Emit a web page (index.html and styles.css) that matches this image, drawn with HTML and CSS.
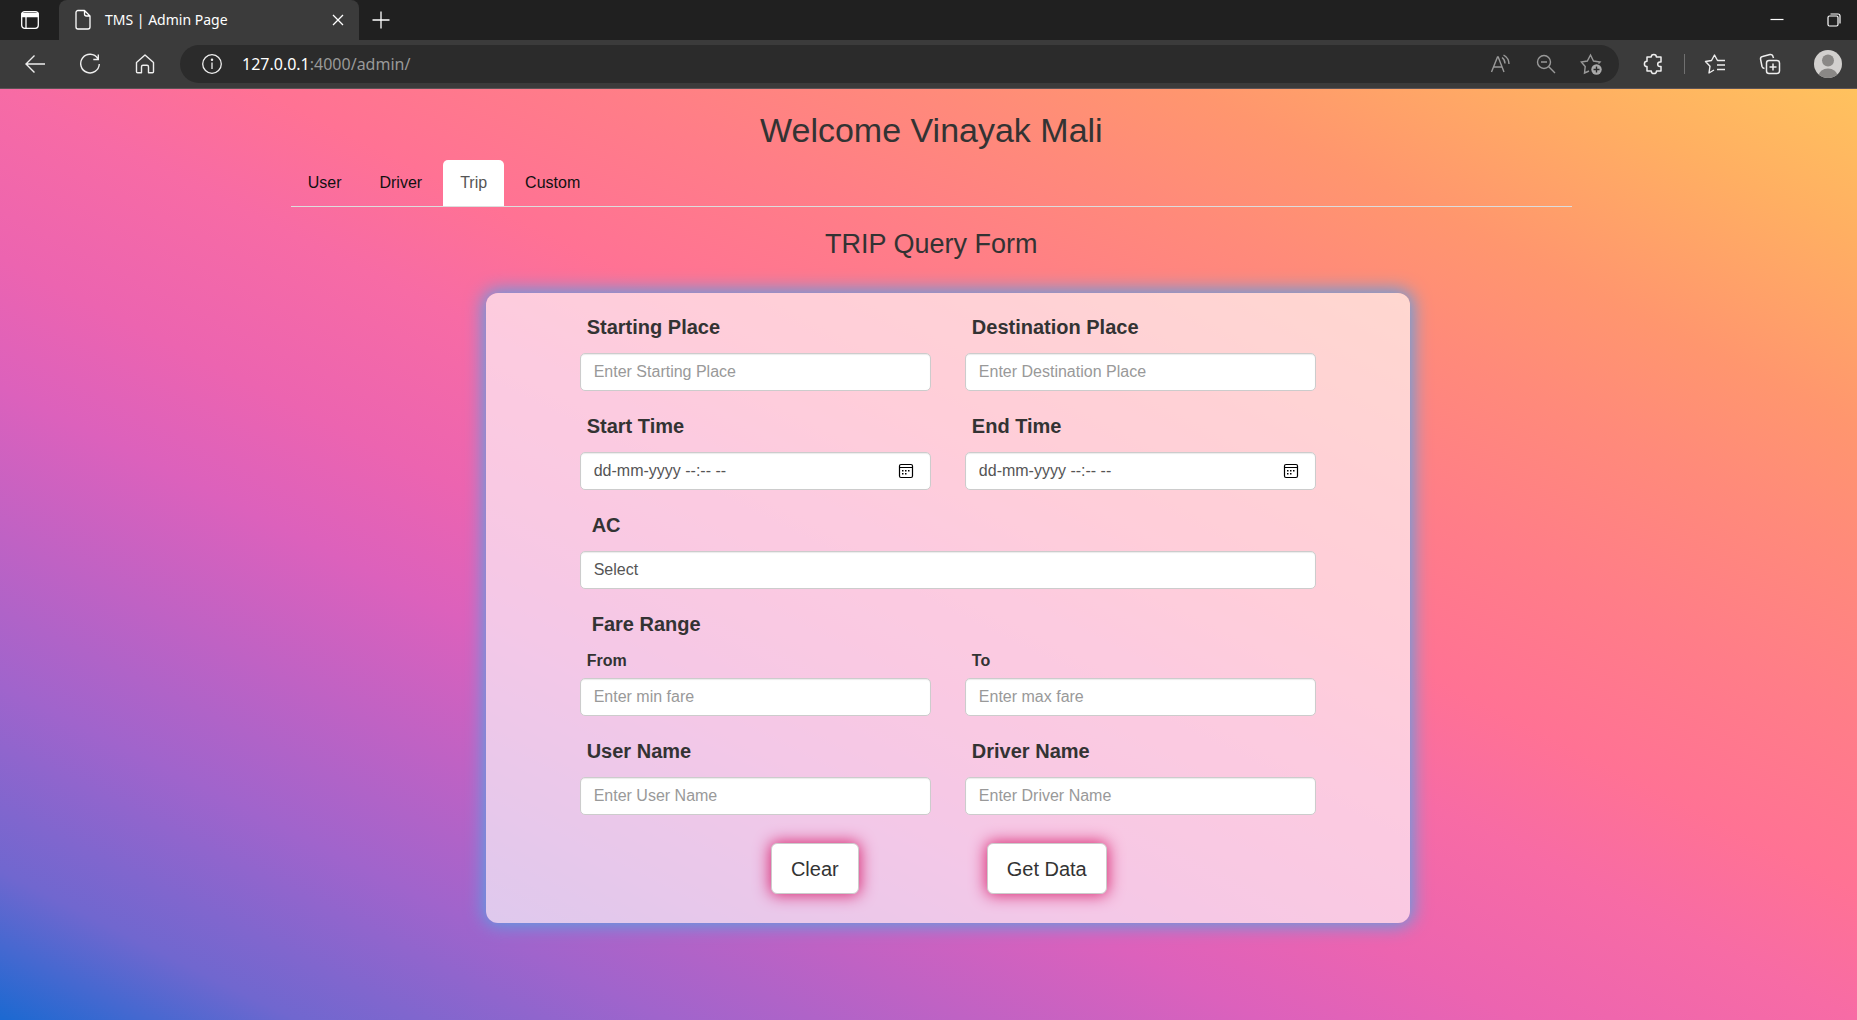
FILE: index.html
```html
<!DOCTYPE html>
<html lang="en">
<head>
<meta charset="utf-8">
<title>TMS | Admin Page</title>
<link rel="stylesheet" href="styles.css">
</head>
<body>
<header class="browser">
  <div class="tabstrip">
    <button class="icon-btn tab-actions" aria-label="Tab actions">
      <svg width="20" height="20" viewBox="0 0 20 20" fill="none" stroke="#fff" stroke-width="1.3"><rect x="1.7" y="1.7" width="16.6" height="16.6" rx="3"/><path d="M2 3.5h16v3H2z" fill="#fff"/><path d="M6 6v12"/></svg>
    </button>
    <div class="tab">
      <svg width="18" height="22" viewBox="0 0 18 22" fill="none" stroke="#fff" stroke-width="1.3" stroke-linejoin="round"><path d="M10.500 1.500H4a2 2 0 0 0-2 2v14.500a2 2 0 0 0 2 2h10a2 2 0 0 0 2-2V7L10.500 1.500V5a2 2 0 0 0 2 2h3.500"/></svg>
      <span class="tab-title">TMS | Admin Page</span>
      <button class="icon-btn" aria-label="Close tab"><svg width="12" height="12" viewBox="0 0 12 12" stroke="#fff" stroke-width="1.3"><path d="M1 1l10 10M11 1L1 11"/></svg></button>
    </div>
    <button class="icon-btn new-tab" aria-label="New tab"><svg width="18" height="18" viewBox="0 0 18 18" stroke="#fff" stroke-width="1.3"><path d="M9 .5v17M.5 9h17"/></svg></button>
    <div class="window-controls">
      <button class="icon-btn" aria-label="Minimize"><svg width="14" height="14" viewBox="0 0 14 14" stroke="#fff" stroke-width="1.2"><path d="M.5 6.500h13"/></svg></button>
      <button class="icon-btn" aria-label="Restore"><svg width="14" height="14" viewBox="0 0 14 14" fill="none" stroke="#fff" stroke-width="1.2"><rect x="1" y="3" width="10" height="10" rx="1.500"/><path d="M3.500 1H11a2 2 0 0 1 2 2v7.500"/></svg></button>
    </div>
  </div>
  <div class="toolbar">
    <button class="icon-btn nav-btn" aria-label="Back"><svg width="22" height="20" viewBox="0 0 22 20" fill="none" stroke="#eee" stroke-width="1.4"><path d="M10.500 1.500L2 10l8.500 8.500M2 10h19"/></svg></button>
    <button class="icon-btn nav-btn" aria-label="Refresh"><svg width="22" height="22" viewBox="0 0 22 22" fill="none" stroke="#eee" stroke-width="1.4"><path d="M18.800 5.500A9.300 9.300 0 1 0 20.300 11M19.300 1.500v5h-5"/></svg></button>
    <button class="icon-btn nav-btn" aria-label="Home"><svg width="22" height="22" viewBox="0 0 22 22" fill="none" stroke="#eee" stroke-width="1.4" stroke-linejoin="round"><path d="M11 2L2.500 9.500v9.300a1 1 0 0 0 1 1H7.500v-6a1.500 1.500 0 0 1 1.500-1.500h4a1.500 1.500 0 0 1 1.500 1.500v6h4a1 1 0 0 0 1-1V9.500z"/></svg></button>
    <div class="address">
      <svg width="22" height="22" viewBox="0 0 22 22" fill="none" stroke="#eee" stroke-width="1.3"><circle cx="11" cy="11" r="9.300"/><path d="M11 9.500v6.500"/><circle cx="11" cy="6.700" r=".6" fill="#eee"/></svg>
      <span class="url"><b>127.0.0.1</b>:4000/admin/</span>
      <button class="icon-btn" aria-label="Read aloud"><svg width="22" height="20" viewBox="0 0 22 20" fill="none" stroke="#999" stroke-width="1.400"><path d="M1.500 18L7.500 3h.7L14 18M3.500 13h9M12 3.500c2 1.500 3 3.500 3 6M13.500 1c3.500 2 5.500 5 5.500 9"/></svg></button>
      <button class="icon-btn" aria-label="Zoom out"><svg width="20" height="20" viewBox="0 0 20 20" fill="none" stroke="#999" stroke-width="1.400"><circle cx="8" cy="8" r="6.500"/><path d="M12.800 12.800L19 19M5 8h6"/></svg></button>
      <button class="icon-btn" aria-label="Add to favorites"><svg width="22" height="22" viewBox="0 0 22 22" fill="none" stroke="#999" stroke-width="1.400"><path d="M9 18l-4.500 2 .7-6.500L1.300 9l6-1L10.500 2l3 6 6.500 1-1.500 1.500"/><circle cx="16.500" cy="16.500" r="5.200" fill="#aaa" stroke="none"/><path d="M16.500 13.500v6M13.500 16.500h6" stroke="#2b2b2b"/></svg></button>
    </div>
    <div class="tools">
      <button class="icon-btn" aria-label="Extensions"><svg width="22" height="22" viewBox="0 0 22 22" fill="none" stroke="#eee" stroke-width="1.500" stroke-linejoin="round"><path d="M4 4h4.200a2.600 2.600 0 0 1 5.200 0H18v5h-1a2.300 2.300 0 0 0 0 4.600h1V18h-4.500a2.600 2.600 0 0 1-5.200 0H4v-4.500a2.600 2.600 0 0 1 0-5.200z"/></svg></button>
      <span class="divider"></span>
      <button class="icon-btn" aria-label="Favorites"><svg width="22" height="22" viewBox="0 0 22 22" fill="none" stroke="#eee" stroke-width="1.400" stroke-linejoin="round"><path d="M10 17l-5 3 1-6.800L1.500 8.500l6-1L10.500 2l3 5.500H21M13 12h8M13 16.500h8"/></svg></button>
      <button class="icon-btn" aria-label="Collections"><svg width="22" height="22" viewBox="0 0 22 22" fill="none" stroke="#eee" stroke-width="1.500"><rect x="7.500" y="7.500" width="13" height="13" rx="2.500"/><path d="M14 10.500v7M10.500 14h7M5.500 15.500a3 3 0 0 1-2.500-2L1.500 6A2.500 2.500 0 0 1 3.500 3.500L11 1.500A2.500 2.500 0 0 1 14 3.500L14.500 5"/></svg></button>
      <button class="icon-btn" aria-label="Profile"><svg width="28" height="28" viewBox="0 0 28 28"><defs><clipPath id="avatar"><circle cx="14" cy="14" r="14"/></clipPath></defs><g clip-path="url(#avatar)"><path fill="#d2d0ce" d="M0 0h28v28H0z"/><circle cx="14" cy="10.500" r="6" fill="#8a8886"/><ellipse cx="14" cy="26" rx="9.500" ry="7.500" fill="#8a8886"/></g></svg></button>
    </div>
  </div>
</header>
<main class="page">
  <div class="container">
    <h1>Welcome Vinayak Mali</h1>
    <nav class="nav-tabs">
      <a href="#user">User</a>
      <a href="#driver">Driver</a>
      <a href="#trip" class="active" aria-current="page">Trip</a>
      <a href="#custom">Custom</a>
    </nav>
    <h2>TRIP Query Form</h2>
    <form class="card">
      <div class="field"><label for="start">Starting Place</label><input id="start" type="text" placeholder="Enter Starting Place"></div>
      <div class="field"><label for="dest">Destination Place</label><input id="dest" type="text" placeholder="Enter Destination Place"></div>
      <div class="field"><label for="from-time">Start Time</label>
        <div class="control"><input id="from-time" type="text" value="dd-mm-yyyy --:-- --"><svg class="calendar" width="16" height="16" viewBox="0 0 16 16"><rect x="1.500" y="1.500" width="13" height="13" rx="1.500" fill="none" stroke="#000" stroke-width="1.200"/><path d="M1.500 4.500h13" stroke="#000"/><path d="M4 7h1.500v1.500H4zM7 7h1.500v1.500H7zM10 7h1.500v1.500H10zM4 10h1.500v1.500H4zM7 10h1.500v1.500H7z"/></svg></div></div>
      <div class="field"><label for="to-time">End Time</label>
        <div class="control"><input id="to-time" type="text" value="dd-mm-yyyy --:-- --"><svg class="calendar" width="16" height="16" viewBox="0 0 16 16"><rect x="1.500" y="1.500" width="13" height="13" rx="1.500" fill="none" stroke="#000" stroke-width="1.200"/><path d="M1.500 4.500h13" stroke="#000"/><path d="M4 7h1.500v1.500H4zM7 7h1.500v1.500H7zM10 7h1.500v1.500H10zM4 10h1.500v1.500H4zM7 10h1.500v1.500H7z"/></svg></div></div>
      <div class="field wide"><label for="ac">AC</label><select id="ac"><option>Select</option><option>Yes</option><option>No</option></select></div>
      <fieldset class="fare">
        <legend>Fare Range</legend>
        <div class="field small"><label for="min">From</label><input id="min" type="text" placeholder="Enter min fare"></div>
        <div class="field small"><label for="max">To</label><input id="max" type="text" placeholder="Enter max fare"></div>
      </fieldset>
      <div class="field"><label for="user-name">User Name</label><input id="user-name" type="text" placeholder="Enter User Name"></div>
      <div class="field"><label for="driver-name">Driver Name</label><input id="driver-name" type="text" placeholder="Enter Driver Name"></div>
      <div class="actions">
        <button type="reset">Clear</button>
        <button type="submit">Get Data</button>
      </div>
    </form>
  </div>
</main>
</body>
</html>
```
FILE: styles.css
```css
* { box-sizing: border-box; }

body {
  margin: 0;
  min-height: 100vh;
  display: flex;
  flex-direction: column;
  font: 16px/24px "Liberation Sans", Arial, sans-serif;
  color: #333;
}

button, input, select { font: inherit; color: inherit; }
svg { display: block; flex: none; }

/* Browser chrome */
.browser {
  background: #3b3b3b;
  color: #fff;
  border-bottom: 1px solid #5c5356;
  font-family: "Noto Sans", sans-serif;
}

.icon-btn { padding: 0; border: 0; background: none; }
.tabstrip { display: flex; align-items: center; height: 40px; background: #202020; }
.tab-actions { margin: 0 19px 0 20px; }

.tab {
  display: flex;
  align-items: center;
  width: 300px;
  height: 40px;
  padding: 0 15px;
  border-radius: 8px 8px 0 0;
  background: #3b3b3b;
}

.tab-title { flex: 1; padding-left: 13px; font-size: 14px; }
.new-tab { margin-left: 13px; }
.window-controls { display: flex; gap: 43px; margin-left: auto; padding-right: 16px; }
.toolbar { display: flex; align-items: center; height: 48px; padding: 0 15px 0 24px; }
.nav-btn { width: 22px; margin-right: 33px; }
.nav-btn:nth-child(3) { margin-right: 24px; }

.address {
  display: flex;
  flex: 1;
  align-items: center;
  gap: 24px;
  height: 38px;
  margin-right: 24px;
  padding: 0 17px 0 21px;
  border-radius: 19px;
  background: #2b2b2b;
}

.url { flex: 1; margin-left: -5px; color: #999; }
.url b { font-weight: 400; color: #fff; }
.tools { display: flex; align-items: center; gap: 33px; }
.divider { width: 1px; height: 20px; margin: 0 -14px; background: #707070; }

/* Admin page */
.page {
  flex: 1;
  padding: 17px 0 96px;
  background: linear-gradient(to top right, #1b69d1 0%, #7067cf 8%, #a064cc 18%, #bf62c4 26%, #dc61bc 34%, #ec64b0 41%, #f76ba5 50%, #ff7294 57%, #ff7d88 66%, #ff8a7a 75%, #ff966e 82%, #ffaf62 92%, #ffc25e 100%);
}

.container { width: 69%; margin: 0 285px 0 auto; }

h1, h2 { margin: 0; font-weight: 400; text-align: center; }
h1 { font-size: 34px; line-height: 48px; }
h2 { margin: 19px 0 31px; font-size: 27px; line-height: 36px; }

.nav-tabs { display: flex; gap: 4px; margin-top: 6px; border-bottom: 1px solid #ddd; }

.nav-tabs a {
  height: 46px;
  padding: 11px 17px;
  border-radius: 5px 5px 0 0;
  color: #111;
  text-decoration: none;
}

.nav-tabs .active { background: #fff; color: #555; }

.card {
  display: grid;
  grid-template-columns: 1fr 1fr;
  gap: 21px 34px;
  margin: 0 162px 0 195px;
  padding: 20px 94px 29px;
  border-radius: 12px;
  background: rgba(255, 255, 255, .65);
  box-shadow: 0 0 18px 3px #5b9fe4;
}

.field { display: flex; flex-direction: column; gap: 12px; }
.field label, legend { padding: 0 7px; font-size: 20px; line-height: 28px; font-weight: 700; }
.field.wide label, .fare legend { padding: 0 12px; }
.wide { grid-column: 1 / -1; }

.small { gap: 3px; }
.field.small label { font-size: 16px; }

.fare {
  display: grid;
  grid-column: 1 / -1;
  grid-template-columns: 1fr 1fr;
  gap: 0 34px;
  margin: 0;
  padding: 0;
  border: 0;
}

legend { margin-bottom: 9px; }

input, select {
  width: 100%;
  height: 38px;
  padding: 0 13px;
  border: 1px solid #ccc;
  border-radius: 5px;
  background: #fff;
  color: #555;
  appearance: none;
  box-shadow: inset 0 1px 1px rgba(0, 0, 0, .08);
}

input::placeholder { color: #999; opacity: 1; }

.control { position: relative; }
.calendar { position: absolute; top: 11px; right: 17px; }

.actions {
  display: flex;
  grid-column: 1 / -1;
  justify-content: center;
  gap: 128px;
  margin-top: 7px;
  padding-right: 18px;
}

.actions button {
  height: 51px;
  padding: 0 19px;
  border: 1px solid #ccc;
  border-radius: 6px;
  background: #fff;
  font-size: 20px;
  box-shadow: 0 0 16px 1px #d8246f;
}
```
